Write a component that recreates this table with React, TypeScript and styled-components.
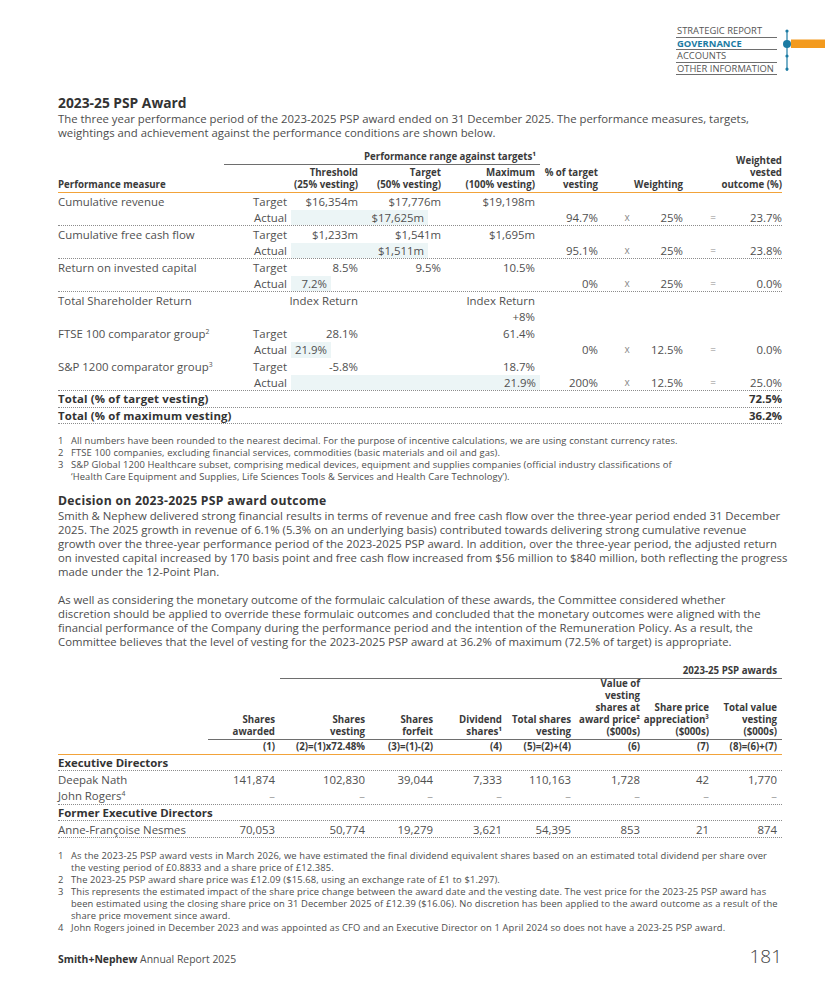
import React from 'react';
import styled, { createGlobalStyle } from 'styled-components';

const GlobalStyle = createGlobalStyle`
  html, body { margin: 0; padding: 0; background: #ffffff; }
  body {
    font-family: "Open Sans", "Noto Sans", sans-serif;
    color: #4d4d4d;
  }
  * { box-sizing: border-box; }
`;

const Page = styled.div`
  width: 825px;
  height: 983px;
  padding: 25px 43px 0 58px;
  overflow: hidden;
`;

/* ---------- top navigation ---------- */
const TopBar = styled.header`
  display: flex;
  justify-content: flex-end;
  align-items: flex-start;
  margin-right: -43px;
`;

const Nav = styled.nav`
  width: 101px;
  display: flex;
  flex-direction: column;
`;

const NavItem = styled.div<{ $active?: boolean }>`
  height: 12.5px;
  padding-left: 1px;
  font-size: 9.4px;
  line-height: 12px;
  white-space: nowrap;
  border-bottom: 1px solid #6e6e6e;
  color: ${(p) => (p.$active ? '#1b7ba3' : '#555555')};
  font-weight: ${(p) => (p.$active ? 700 : 400)};
`;

const Rail = () => (
  <svg width="48" height="50" viewBox="0 0 48 50" style={{ display: 'block' }}>
    <rect x="14" y="14.5" width="34" height="8.5" fill="#f39a1e" />
    <line x1="10" y1="5" x2="10" y2="46" stroke="#1b7ba3" strokeWidth="1.2" />
    <circle cx="10" cy="6" r="1.6" fill="#1b7ba3" />
    <circle cx="10" cy="31" r="1.6" fill="#1b7ba3" />
    <circle cx="10" cy="44" r="1.6" fill="#1b7ba3" />
    <circle cx="10" cy="19" r="4" fill="#1b7ba3" />
  </svg>
);

/* ---------- text blocks ---------- */
const Title = styled.h2`
  margin: 20px 0 0;
  font-size: 13.8px;
  line-height: 16px;
  font-weight: 700;
  color: #333333;
`;

const SubTitle = styled.h3`
  margin: 10px 0 0;
  font-size: 12.2px;
  line-height: 15.5px;
  letter-spacing: 0.3px;
  font-weight: 700;
  color: #333333;
`;

const Para = styled.p<{ $gap?: number }>`
  margin: ${(p) => p.$gap ?? 0}px 0 0;
  font-size: 11.35px;
  line-height: 14px;
  color: #4d4d4d;
`;

const Line = styled.span`
  display: block;
  white-space: nowrap;
`;

const Lines = ({ lines, gap }: { lines: string[]; gap?: number }) => (
  <Para $gap={gap}>
    {lines.map((l, i) => (
      <Line key={i}>{l}</Line>
    ))}
  </Para>
);

const Notes = styled.ol<{ $gap: number }>`
  list-style: none;
  margin: ${(p) => p.$gap}px 0 0;
  padding: 0;
  font-size: 9.4px;
  letter-spacing: 0.12px;
  line-height: 12px;
  color: #4d4d4d;
`;

const Note = styled.li`
  display: grid;
  grid-template-columns: 13px 1fr;
`;

const Sup = styled.sup`
  font-size: 0.6em;
  line-height: 0;
  vertical-align: 0.55em;
`;

/* ---------- table 1 ---------- */
const T1_COLS = '166px 67px 69px 83px 97px 72px 30px 56px 30px 54px';

const PerfTable = styled.section`
  margin-top: 10px;
`;

const PerfHead = styled.div`
  display: grid;
  grid-template-columns: ${T1_COLS};
  grid-template-rows: 15px 27px;
  border-bottom: 1px solid #f2a33a;
  font-size: 9.7px;
  line-height: 12px;
  font-weight: 700;
  color: #3a3a3a;
`;

const HeadCell = styled.div<{ $col: string; $row: string; $pr?: number; $left?: boolean }>`
  grid-column: ${(p) => p.$col};
  grid-row: ${(p) => p.$row};
  align-self: end;
  display: flex;
  justify-content: ${(p) => (p.$left ? 'flex-start' : 'flex-end')};
  text-align: ${(p) => (p.$left ? 'left' : 'right')};
  padding-right: ${(p) => p.$pr ?? 0}px;
  padding-bottom: 1px;
  white-space: nowrap;
`;

const GroupHead = styled.div`
  grid-column: 2 / 6;
  grid-row: 1;
  border-bottom: 1px solid #6e6e6e;
  text-align: right;
  padding-right: 4px;
  line-height: 13px;
  white-space: nowrap;
`;

const PRow = styled.div<{ $dotted?: boolean }>`
  display: grid;
  grid-template-columns: ${T1_COLS};
  height: 16.5px;
  align-items: center;
  font-size: 11.4px;
  line-height: 15px;
  color: #505050;
  border-bottom: ${(p) => (p.$dotted ? '1px dotted #8c8c8c' : '0')};
`;

const Measure = styled.div<{ $bold?: boolean }>`
  grid-column: 1 / 3;
  grid-row: 1;
  white-space: nowrap;
  font-weight: ${(p) => (p.$bold ? 700 : 400)};
  letter-spacing: ${(p) => (p.$bold ? '0.15px' : '0')};
  color: ${(p) => (p.$bold ? '#333333' : '#505050')};
`;

const Label = styled.div`
  grid-column: 2;
  grid-row: 1;
  text-align: right;
  padding-right: 4px;
`;

const Val = styled.div<{ $col: number; $pr: number; $bold?: boolean }>`
  grid-column: ${(p) => p.$col};
  grid-row: 1;
  display: flex;
  justify-content: flex-end;
  padding-right: ${(p) => p.$pr}px;
  white-space: nowrap;
  font-weight: ${(p) => (p.$bold ? 700 : 400)};
  color: ${(p) => (p.$bold ? '#333333' : '#505050')};
`;

const Op = styled.div<{ $col: number }>`
  grid-column: ${(p) => p.$col};
  grid-row: 1;
  text-align: center;
  color: #8a8a8a;
  font-size: 10px;
`;

const Band = styled.div`
  grid-column: 3 / 6;
  grid-row: 1;
  align-self: stretch;
  display: flex;
`;

const Bar = styled.div`
  height: 100%;
  background: #ecf5f6;
  padding-right: 4px;
  white-space: nowrap;
  display: flex;
  align-items: center;
  justify-content: flex-end;
`;

/* ---------- table 2 ---------- */
const T2_COLS = '150px 72px 90px 68px 69px 69px 69px 69px 68px';

const AwardTable = styled.section`
  margin-top: 16px;
`;

const AwardHead = styled.div`
  display: grid;
  grid-template-columns: ${T2_COLS};
  grid-template-rows: 14px 61px 14px;
  font-size: 9.7px;
  line-height: 12px;
  font-weight: 700;
  color: #3a3a3a;
  border-bottom: 1px solid #f2a33a;
`;

const AwardGroup = styled.div`
  grid-column: 3 / 10;
  grid-row: 1;
  border-bottom: 1px solid #6e6e6e;
  text-align: right;
  padding-right: 5px;
  line-height: 12px;
`;

const HeadRule = styled.div`
  grid-column: 2 / 10;
  grid-row: 2;
  border-bottom: 1px solid #6e6e6e;
`;

const AwardHeadCell = styled.div<{ $col: number; $row: number }>`
  grid-column: ${(p) => p.$col};
  grid-row: ${(p) => p.$row};
  align-self: end;
  display: flex;
  justify-content: flex-end;
  text-align: right;
  padding-right: 5px;
  padding-bottom: ${(p) => (p.$row === 2 ? 2 : 1)}px;
  white-space: nowrap;
`;

const ARow = styled.div<{ $dotted?: boolean }>`
  display: grid;
  grid-template-columns: ${T2_COLS};
  height: 16.7px;
  align-items: center;
  font-size: 11.4px;
  line-height: 15px;
  color: #505050;
  border-bottom: ${(p) => (p.$dotted ? '1px dotted #8c8c8c' : '0')};
`;

const Name = styled.div<{ $bold?: boolean }>`
  grid-column: ${(p) => (p.$bold ? '1 / 10' : '1')};
  white-space: nowrap;
  font-weight: ${(p) => (p.$bold ? 700 : 400)};
  color: ${(p) => (p.$bold ? '#333333' : '#505050')};
`;

const Num = styled.div<{ $dash?: boolean }>`
  text-align: right;
  padding-right: 5px;
  color: ${(p) => (p.$dash ? '#a0a0a0' : '#505050')};
`;

/* ---------- footer ---------- */
const Footer = styled.footer`
  margin-top: 9px;
  display: flex;
  justify-content: space-between;
  align-items: baseline;
`;

const Brand = styled.div`
  font-size: 10.4px;
  color: #505050;
  b { color: #333333; font-weight: 700; }
`;

const PageNo = styled.div`
  font-size: 19px;
  font-weight: 300;
  color: #444444;
`;

/* ---------- data ---------- */
type ActualRow = {
  bar: number;
  value: string;
  pct: string;
  weight: string;
  outcome: string;
};

const ActualLine = ({ a, dotted }: { a: ActualRow; dotted?: boolean }) => (
  <PRow $dotted={dotted}>
    <Label>Actual</Label>
    <Band>
      <Bar style={{ width: `${a.bar}px` }}>{a.value}</Bar>
    </Band>
    <Val $col={6} $pr={14}>{a.pct}</Val>
    <Op $col={7}>x</Op>
    <Val $col={8} $pr={15}>{a.weight}</Val>
    <Op $col={9}>=</Op>
    <Val $col={10} $pr={0}>{a.outcome}</Val>
  </PRow>
);

const awards = [
  { name: 'Deepak Nath', v: ['141,874', '102,830', '39,044', '7,333', '110,163', '1,728', '42', '1,770'] },
];

const intro = [
  'The three year performance period of the 2023-2025 PSP award ended on 31 December 2025. The performance measures, targets,',
  'weightings and achievement against the performance conditions are shown below.',
];

const decision1 = [
  'Smith & Nephew delivered strong financial results in terms of revenue and free cash flow over the three-year period ended 31 December',
  '2025. The 2025 growth in revenue of 6.1% (5.3% on an underlying basis) contributed towards delivering strong cumulative revenue',
  'growth over the three-year performance period of the 2023-2025 PSP award. In addition, over the three-year period, the adjusted return',
  'on invested capital increased by 170 basis point and free cash flow increased from $56 million to $840 million, both reflecting the progress',
  'made under the 12-Point Plan.',
];

const decision2 = [
  'As well as considering the monetary outcome of the formulaic calculation of these awards, the Committee considered whether',
  'discretion should be applied to override these formulaic outcomes and concluded that the monetary outcomes were aligned with the',
  'financial performance of the Company during the performance period and the intention of the Remuneration Policy. As a result, the',
  'Committee believes that the level of vesting for the 2023-2025 PSP award at 36.2% of maximum (72.5% of target) is appropriate.',
];

export default function App() {
  return (
    <Page>
      <GlobalStyle />
      <TopBar>
        <Nav>
          <NavItem>STRATEGIC REPORT</NavItem>
          <NavItem $active>GOVERNANCE</NavItem>
          <NavItem>ACCOUNTS</NavItem>
          <NavItem>OTHER INFORMATION</NavItem>
        </Nav>
        <Rail />
      </TopBar>

      <Title>2023-25 PSP Award</Title>
      <Lines gap={1} lines={intro} />

      <PerfTable>
        <PerfHead>
          <GroupHead>Performance range against targets¹</GroupHead>
          <HeadCell $col="1" $row="2" $left><span>Performance measure</span></HeadCell>
          <HeadCell $col="3" $row="2" $pr={2}><span>Threshold<br />(25% vesting)</span></HeadCell>
          <HeadCell $col="4" $row="2" $pr={2}><span>Target<br />(50% vesting)</span></HeadCell>
          <HeadCell $col="5" $row="2" $pr={5}><span>Maximum<br />(100% vesting)</span></HeadCell>
          <HeadCell $col="6" $row="2" $pr={14}><span>% of target<br />vesting</span></HeadCell>
          <HeadCell $col="7 / 9" $row="2" $pr={15}><span>Weighting</span></HeadCell>
          <HeadCell $col="9 / 11" $row="1 / 3" $pr={0}><span>Weighted<br />vested<br />outcome (%)</span></HeadCell>
        </PerfHead>

        <PRow>
          <Measure>Cumulative revenue</Measure>
          <Label>Target</Label>
          <Val $col={3} $pr={2}>$16,354m</Val>
          <Val $col={4} $pr={2}>$17,776m</Val>
          <Val $col={5} $pr={5}>$19,198m</Val>
        </PRow>
        <ActualLine dotted a={{ bar: 137, value: '$17,625m', pct: '94.7%', weight: '25%', outcome: '23.7%' }} />

        <PRow>
          <Measure>Cumulative free cash flow</Measure>
          <Label>Target</Label>
          <Val $col={3} $pr={2}>$1,233m</Val>
          <Val $col={4} $pr={2}>$1,541m</Val>
          <Val $col={5} $pr={5}>$1,695m</Val>
        </PRow>
        <ActualLine dotted a={{ bar: 137, value: '$1,511m', pct: '95.1%', weight: '25%', outcome: '23.8%' }} />

        <PRow>
          <Measure>Return on invested capital</Measure>
          <Label>Target</Label>
          <Val $col={3} $pr={2}>8.5%</Val>
          <Val $col={4} $pr={2}>9.5%</Val>
          <Val $col={5} $pr={5}>10.5%</Val>
        </PRow>
        <ActualLine dotted a={{ bar: 40, value: '7.2%', pct: '0%', weight: '25%', outcome: '0.0%' }} />

        <PRow>
          <Measure>Total Shareholder Return</Measure>
          <Val $col={3} $pr={2}>Index Return</Val>
          <Val $col={5} $pr={5}>Index Return</Val>
        </PRow>
        <PRow>
          <Val $col={5} $pr={5}>+8%</Val>
        </PRow>

        <PRow>
          <Measure>FTSE 100 comparator group<Sup>2</Sup></Measure>
          <Label>Target</Label>
          <Val $col={3} $pr={2}>28.1%</Val>
          <Val $col={5} $pr={5}>61.4%</Val>
        </PRow>
        <ActualLine a={{ bar: 40, value: '21.9%', pct: '0%', weight: '12.5%', outcome: '0.0%' }} />

        <PRow>
          <Measure>S&amp;P 1200 comparator group<Sup>3</Sup></Measure>
          <Label>Target</Label>
          <Val $col={3} $pr={2}>-5.8%</Val>
          <Val $col={5} $pr={5}>18.7%</Val>
        </PRow>
        <ActualLine dotted a={{ bar: 249, value: '21.9%', pct: '200%', weight: '12.5%', outcome: '25.0%' }} />

        <PRow $dotted>
          <Measure $bold>Total (% of target vesting)</Measure>
          <Val $col={10} $pr={0} $bold>72.5%</Val>
        </PRow>
        <PRow $dotted>
          <Measure $bold>Total (% of maximum vesting)</Measure>
          <Val $col={10} $pr={0} $bold>36.2%</Val>
        </PRow>
      </PerfTable>

      <Notes $gap={11}>
        <Note><span>1</span><span>All numbers have been rounded to the nearest decimal. For the purpose of incentive calculations, we are using constant currency rates.</span></Note>
        <Note><span>2</span><span>FTSE 100 companies, excluding financial services, commodities (basic materials and oil and gas).</span></Note>
        <Note><span>3</span><span>S&amp;P Global 1200 Healthcare subset, comprising medical devices, equipment and supplies companies (official industry classifications of<br />‘Health Care Equipment and Supplies, Life Sciences Tools &amp; Services and Health Care Technology’).</span></Note>
      </Notes>

      <SubTitle>Decision on 2023-2025 PSP award outcome</SubTitle>
      <Lines lines={decision1} />
      <Lines gap={14} lines={decision2} />

      <AwardTable>
        <AwardHead>
          <AwardGroup>2023-25 PSP awards</AwardGroup>
          <HeadRule />
          <AwardHeadCell $col={2} $row={2}><span>Shares<br />awarded</span></AwardHeadCell>
          <AwardHeadCell $col={3} $row={2}><span>Shares<br />vesting</span></AwardHeadCell>
          <AwardHeadCell $col={4} $row={2}><span>Shares<br />forfeit</span></AwardHeadCell>
          <AwardHeadCell $col={5} $row={2}><span>Dividend<br />shares¹</span></AwardHeadCell>
          <AwardHeadCell $col={6} $row={2}><span>Total shares<br />vesting</span></AwardHeadCell>
          <AwardHeadCell $col={7} $row={2}><span>Value of<br />vesting<br />shares at<br />award price²<br />($000s)</span></AwardHeadCell>
          <AwardHeadCell $col={8} $row={2}><span>Share price<br />appreciation³<br />($000s)</span></AwardHeadCell>
          <AwardHeadCell $col={9} $row={2}><span>Total value<br />vesting<br />($000s)</span></AwardHeadCell>
          <AwardHeadCell $col={2} $row={3}><span>(1)</span></AwardHeadCell>
          <AwardHeadCell $col={3} $row={3}><span>(2)=(1)x72.48%</span></AwardHeadCell>
          <AwardHeadCell $col={4} $row={3}><span>(3)=(1)-(2)</span></AwardHeadCell>
          <AwardHeadCell $col={5} $row={3}><span>(4)</span></AwardHeadCell>
          <AwardHeadCell $col={6} $row={3}><span>(5)=(2)+(4)</span></AwardHeadCell>
          <AwardHeadCell $col={7} $row={3}><span>(6)</span></AwardHeadCell>
          <AwardHeadCell $col={8} $row={3}><span>(7)</span></AwardHeadCell>
          <AwardHeadCell $col={9} $row={3}><span>(8)=(6)+(7)</span></AwardHeadCell>
        </AwardHead>

        <ARow $dotted>
          <Name $bold>Executive Directors</Name>
        </ARow>
        {awards.map((r) => (
          <ARow key={r.name}>
            <Name>{r.name}</Name>
            {r.v.map((x, i) => <Num key={i}>{x}</Num>)}
          </ARow>
        ))}
        <ARow $dotted>
          <Name>John Rogers<Sup>4</Sup></Name>
          {Array.from({ length: 8 }).map((_, i) => <Num key={i} $dash>–</Num>)}
        </ARow>
        <ARow $dotted>
          <Name $bold>Former Executive Directors</Name>
        </ARow>
        <ARow $dotted>
          <Name>Anne-Françoise Nesmes</Name>
          {['70,053', '50,774', '19,279', '3,621', '54,395', '853', '21', '874'].map((x, i) => <Num key={i}>{x}</Num>)}
        </ARow>
      </AwardTable>

      <Notes $gap={12}>
        <Note><span>1</span><span>As the 2023-25 PSP award vests in March 2026, we have estimated the final dividend equivalent shares based on an estimated total dividend per share over the vesting period of £0.8833 and a share price of £12.385.</span></Note>
        <Note><span>2</span><span>The 2023-25 PSP award share price was £12.09 ($15.68, using an exchange rate of £1 to $1.297).</span></Note>
        <Note><span>3</span><span>This represents the estimated impact of the share price change between the award date and the vesting date. The vest price for the 2023-25 PSP award has been estimated using the closing share price on 31 December 2025 of £12.39 ($16.06). No discretion has been applied to the award outcome as a result of the share price movement since award.</span></Note>
        <Note><span>4</span><span>John Rogers joined in December 2023 and was appointed as CFO and an Executive Director on 1 April 2024 so does not have a 2023-25 PSP award.</span></Note>
      </Notes>

      <Footer>
        <Brand><b>Smith+Nephew</b> Annual Report 2025</Brand>
        <PageNo>181</PageNo>
      </Footer>
    </Page>
  );
}
